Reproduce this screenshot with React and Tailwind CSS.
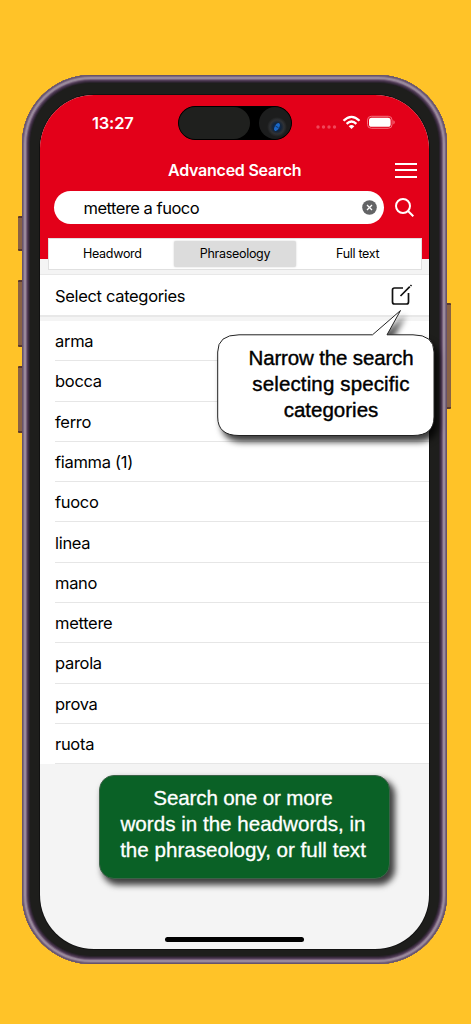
import React, { useState } from "react";

const words = [
  "arma",
  "bocca",
  "ferro",
  "fiamma (1)",
  "fuoco",
  "linea",
  "mano",
  "mettere",
  "parola",
  "prova",
  "ruota",
];

const tabs = ["Headword", "Phraseology", "Full text"];

function SideButton({ className }) {
  return (
    <div
      className={
        "absolute w-[5px] rounded-[1px] border-y-2 border-[#5b3a2c] bg-[#8a6243] " +
        className
      }
    />
  );
}

function StatusBar() {
  return (
    <div className="flex h-[55px] shrink-0 items-center text-white">
      <span className="ml-[52px] w-[86px] pt-px text-[16.5px] font-semibold tracking-[-0.2px]">
        13:27
      </span>
      <div className="flex h-[34px] w-[114px] justify-between rounded-full border border-black bg-black">
        <div className="w-[71px] rounded-full bg-[#1f201e]" />
        <div className="flex w-8 items-center justify-center rounded-full bg-[#1c1d1d]">
          <svg width="32" height="32" viewBox="0 0 32 32">
            <defs>
              <radialGradient id="lens">
                <stop offset="0" stopColor="#0a3f86" />
                <stop offset="0.4" stopColor="#11243c" />
                <stop offset="0.7" stopColor="#303235" />
                <stop offset="1" stopColor="#1c1d1d" />
              </radialGradient>
            </defs>
            <circle cx="18" cy="20" r="10" fill="url(#lens)" />
            <ellipse cx="18" cy="20" rx="2.2" ry="4.2" fill="#1a68c8" transform="rotate(30 18 20)" />
            <path d="M16.500 19.200l3 1.500" stroke="#0b2547" strokeWidth="0.8" />
          </svg>
        </div>
      </div>
      <svg className="ml-[23px]" width="82" height="16" viewBox="0 0 82 16" fill="none">
        <g fill="#f0465a">
          <circle cx="3" cy="12" r="1.7" />
          <circle cx="8.5" cy="12" r="1.7" />
          <circle cx="14" cy="12" r="1.7" />
          <circle cx="19.5" cy="12" r="1.7" />
        </g>
        <g stroke="#fff" strokeWidth="2.3">
          <path d="M28.5 5.8Q36.5 -2 44.5 5.8" />
          <path d="M31.6 8.9Q36.5 4.2 41.4 8.9" />
        </g>
        <path d="M33.7 11.2Q36.5 8.7 39.3 11.2L36.5 14Z" fill="#fff" />
        <rect x="52.5" y="1.3" width="24.6" height="12" rx="3.8" stroke="#f5707e" />
        <rect x="54" y="2.8" width="21.6" height="9" rx="2.6" fill="#fff" />
        <path d="M78.4 5.2c1.8.6 1.8 3.6 0 4.2z" fill="#f5707e" />
      </svg>
    </div>
  );
}

function Bubble() {
  return (
    <div className="absolute top-[310px] left-[217px] h-[127px] w-[218px]">
      <svg
        className="absolute inset-0 overflow-visible drop-shadow-[4px_6px_3px_rgba(0,0,0,0.75)]"
        width="218"
        height="127"
        viewBox="0 0 218 127"
      >
        <path
          d="M22 24.8H155.5L183.5 0.5L170 24.8H196Q217 24.8 217 42V107Q217 125.5 196 125.5H22Q.7 125.5 .7 107V42Q.7 24.8 22 24.8Z"
          fill="#fff"
          stroke="#222"
          strokeWidth="1"
        />
      </svg>
      <p className="relative pt-[35px] pl-[10px] text-center font-['Liberation_Sans',Arial,sans-serif] text-[20.5px] leading-[26px] text-black [-webkit-text-stroke:0.4px_black]">
        <span className="tracking-[-0.15px]">Narrow the search</span>
        <br />
        <span className="tracking-[0.13px]">selecting specific</span>
        <br />
        categories
      </p>
    </div>
  );
}

export default function App() {
  const [query, setQuery] = useState("mettere a fuoco");
  const [active, setActive] = useState("Phraseology");

  return (
    <div className="relative h-[1024px] w-[471px] overflow-hidden bg-[#ffc328] pt-[75px] pl-[22px] font-[Inter,'Noto_Sans',sans-serif] text-black">
      <SideButton className="top-[216px] left-[18px] h-[35px]" />
      <SideButton className="top-[280px] left-[18px] h-[67px]" />
      <SideButton className="top-[366px] left-[18px] h-[67px]" />
      <SideButton className="top-[303px] left-[446px] h-[106px]" />

      {/* phone body */}
      <div className="relative h-[889px] w-[425px] rounded-[69px] bg-[#1e1e1c] px-[18px] pt-5 pb-[15px] shadow-[inset_0_0_0_1px_#67536b,inset_0_0_0_2px_#7c6980,inset_0_0_0_4px_#99899b,inset_0_0_0_5px_#77617a,inset_0_0_0_6px_#513d57,inset_0_0_0_7px_#3c2d40,inset_0_0_0_8px_#2a222c]">
        <div className="flex h-[854px] flex-col overflow-hidden rounded-[54px] bg-[#f4f4f4] shadow-[0_0_0_1px_#111]">
          <div className="h-[164px] shrink-0 bg-[#e30019]">
            <StatusBar />
            <div className="flex h-[41px] items-center justify-between pr-3 pb-px pl-[128px] text-white">
              <h1 className="text-[16px] font-semibold tracking-[-0.24px]">Advanced Search</h1>
              <button className="flex w-[22px] flex-col gap-[4.5px]" aria-label="Menu">
                <span className="h-[2px] w-full bg-white" />
                <span className="h-[2px] w-full bg-white" />
                <span className="h-[2px] w-full bg-white" />
              </button>
            </div>
            <div className="flex items-center pl-[14px]">
              <div className="flex h-[33px] w-[330px] items-center justify-between rounded-full bg-white pr-[7px] pl-[29.5px]">
                <input
                  className="w-[220px] pt-[2px] text-[16.5px] tracking-[-0.5px] outline-none"
                  value={query}
                  onChange={(e) => setQuery(e.target.value)}
                />
                <button onClick={() => setQuery("")} aria-label="Clear">
                  <svg width="15" height="15" viewBox="0 0 15 15">
                    <circle cx="7.5" cy="7.5" r="7.3" fill="#636466" />
                    <path d="M5 5l5 5M10 5l-5 5" stroke="#fff" strokeWidth="1.3" />
                  </svg>
                </button>
              </div>
              <svg className="ml-[11px]" width="19" height="19" viewBox="0 0 19 19" fill="none" stroke="#fff" strokeWidth="2">
                <circle cx="8" cy="8" r="7" />
                <path d="M13 13l5.3 5.2" />
              </svg>
            </div>
          </div>

          <div className="mx-2 -mt-[21px] flex h-[32px] w-[374px] shrink-0 border border-[#e0e0e0] bg-white p-[2px] text-[12.5px] tracking-[-0.3px]">
            {tabs.map((tab) => (
              <button
                key={tab}
                onClick={() => setActive(tab)}
                className={
                  tab === active
                    ? "flex-1 rounded-[2px] bg-[#dcdcdc] shadow-[0_0_2px_#ccc]"
                    : "flex-1"
                }
              >
                {tab}
              </button>
            ))}
          </div>

          <div className="mt-1 flex h-[43px] shrink-0 items-center justify-between border-t border-b-2 border-[#e8e8e8] bg-white pr-4 pl-[15px]">
            <span className="pt-[2px] text-[16.5px] tracking-[-0.33px]">Select categories</span>
            <svg width="22" height="22" viewBox="0 0 22 22" fill="none" stroke="#111" strokeWidth="1.7">
              <path d="M12 4H3.5Q1.5 4 1.5 6V18Q1.5 20 3.5 20H15.5Q17.5 20 17.5 18V9" />
              <path d="M9.5 12L18.8 2.7M19.5 2l1-1" />
            </svg>
          </div>

          <ul className="mt-1 shrink-0 bg-white pl-[15px]">
            {words.map((w) => (
              <li
                key={w}
                className="flex h-[40.3px] items-center border-b border-[#e6e6e6] pt-[1.5px] text-[16.5px] tracking-[-0.3px]"
              >
                {w}
              </li>
            ))}
          </ul>

          <p className="mt-[11px] ml-[59px] h-[104px] w-[291px] shrink-0 rounded-[15px] border border-[#3c6248] bg-[#0a6126] pt-[9px] pr-[3px] text-center font-['Liberation_Sans',Arial,sans-serif] text-[20.6px] leading-[26px] text-white shadow-[4px_5px_6px_1px_rgba(0,0,0,0.75)] [-webkit-text-stroke:0.3px_white]">
            <span className="tracking-[-0.15px]">Search one or more</span>
            <br />
            words in the headwords, in
            <br />
            the phraseology, or full text
          </p>

          <div className="mx-auto mt-auto mb-[7px] h-[5px] w-[139px] shrink-0 rounded-full bg-black" />
        </div>
      </div>

      <Bubble />
    </div>
  );
}
